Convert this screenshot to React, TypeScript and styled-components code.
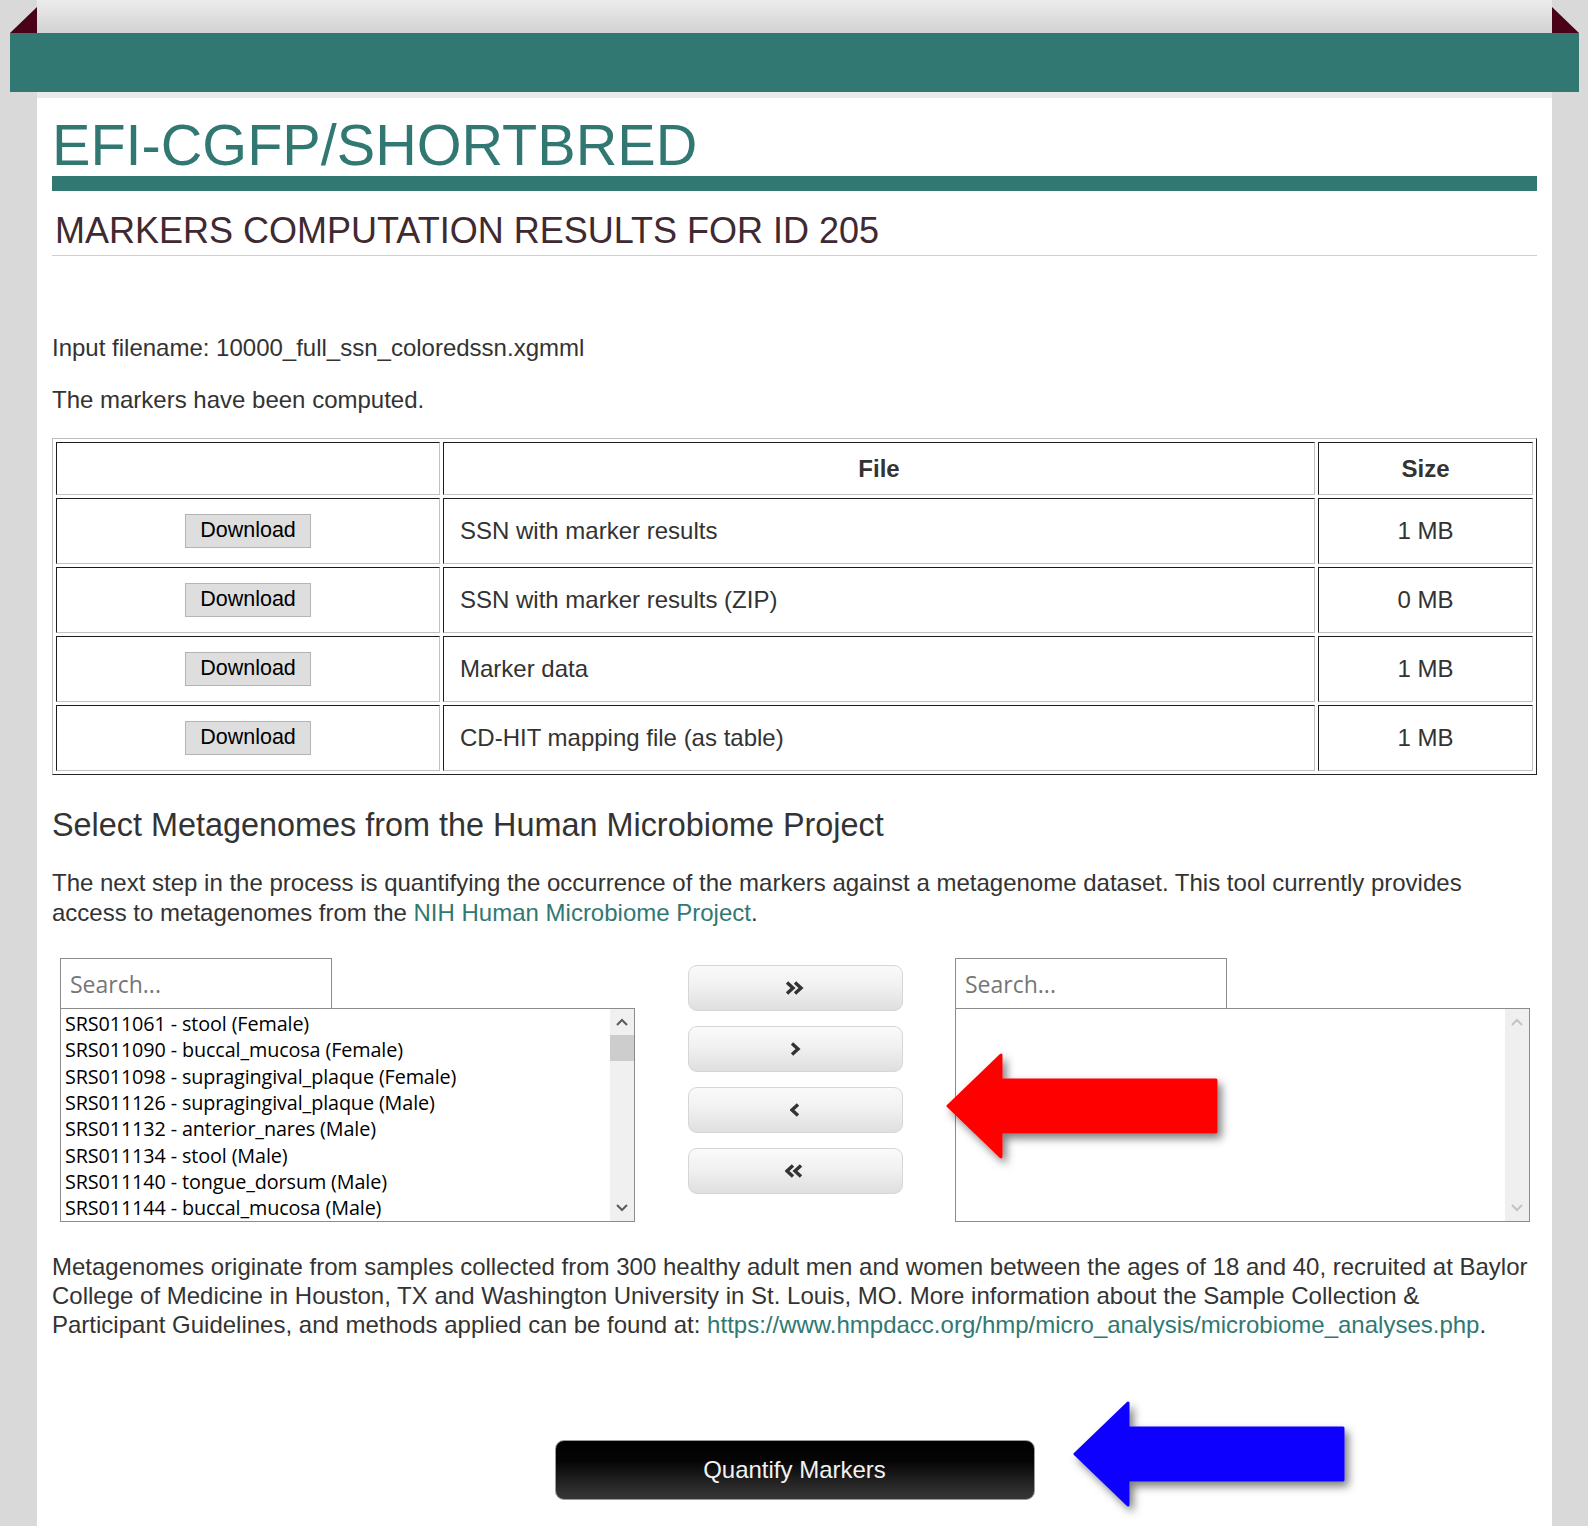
import React from "react";
import styled, { createGlobalStyle } from "styled-components";

const TEAL = "#317873";
const SANS = `"Liberation Sans", Arial, sans-serif`;
const UI = `"Open Sans", "Noto Sans", sans-serif`;

const GlobalStyle = createGlobalStyle`
  * { box-sizing: border-box; }
  html, body { margin: 0; padding: 0; }
  body {
    background: #d9d9d9;
    font-family: ${SANS};
    color: #333;
  }
`;

const Page = styled.div`
  width: 1588px;
  min-height: 1526px;
`;

const Header = styled.header`
  display: flex;
  align-items: flex-end;
  height: 33px;
  padding: 0 9px 0 10px;
`;

const Fold = styled.div<{ $side: "left" | "right" }>`
  width: 27px;
  height: 26px;
  background: #4a0219;
  clip-path: ${(p) =>
    p.$side === "left"
      ? "polygon(0 100%, 100% 0, 100% 100%)"
      : "polygon(0 0, 0 100%, 100% 100%)"};
`;

const Strip = styled.div`
  flex: 1;
  height: 33px;
  background: linear-gradient(#ececec, #d2d2d2);
`;

const Banner = styled.div`
  height: 59px;
  margin: 0 9px 0 10px;
  background: ${TEAL};
`;

const Main = styled.main`
  margin: 0 36px 0 37px;
  background: #fff;
  border-top: 6px solid #e9e9e9;
  padding: 18px 15px 40px;
`;

const Title = styled.h1`
  margin: 0;
  font-size: 57.6px;
  line-height: 58px;
  font-weight: normal;
  color: ${TEAL};
`;

const TitleRule = styled.div`
  height: 15px;
  margin-top: 2px;
  background: ${TEAL};
`;

const SubTitle = styled.h2`
  margin: 19px 0 0;
  padding: 0 0 3px 3px;
  font-size: 36px;
  line-height: 42px;
  font-weight: normal;
  color: #3f2a31;
  border-bottom: 1px solid #cfcfcf;
`;

const Text = styled.p<{ $mt?: number; $mb?: number }>`
  margin: ${(p) => p.$mt ?? 0}px 0 ${(p) => p.$mb ?? 0}px;
  font-size: 24px;
  line-height: 29.4px;
  color: #333;
`;

const Link = styled.a`
  color: ${TEAL};
  text-decoration: none;
`;

const FileTable = styled.table`
  width: 100%;
  table-layout: fixed;
  border-collapse: separate;
  border-spacing: 3px;
  border: 1px solid;
  border-color: #bdbdbd #262626 #262626 #bdbdbd;
  font-size: 24px;
  color: #333;
`;

const HeadCell = styled.th<{ $w?: number }>`
  ${(p) => (p.$w ? `width: ${p.$w}px;` : "")}
  padding: 12px 16px 11px;
  line-height: 28px;
  font-weight: bold;
  text-align: center;
  border: 1px solid;
  border-color: #1c1c1c #c2c2c2 #c2c2c2 #1c1c1c;
`;

const Cell = styled.td<{ $align?: "left" | "center" }>`
  height: 66px;
  padding: 0 16px;
  text-align: ${(p) => p.$align ?? "left"};
  vertical-align: middle;
  border: 1px solid;
  border-color: #1c1c1c #c2c2c2 #c2c2c2 #1c1c1c;
`;

const DownloadButton = styled.button`
  height: 34px;
  padding: 0 14px;
  font-family: ${SANS};
  font-size: 21.5px;
  color: #000;
  background: #dedede;
  border: 1px solid #b4b4b4;
  border-radius: 0;
`;

const SectionTitle = styled.h3`
  margin: 31px 0 0;
  font-size: 32.4px;
  line-height: 38.4px;
  font-weight: normal;
  color: #333;
`;

const DualList = styled.div`
  position: relative;
  display: flex;
  justify-content: space-between;
  align-items: flex-start;
  margin-top: 31px;
  padding: 0 7px 0 8px;
`;

const ListColumn = styled.div`
  width: 575px;
  display: flex;
  flex-direction: column;
`;

const SearchBox = styled.input`
  width: 272px;
  height: 51px;
  padding: 0 9px;
  border: 1px solid #8c8c8c;
  font-family: ${UI};
  font-size: 23px;
  color: #333;
  outline: none;
  &::placeholder {
    color: #767676;
  }
`;

const ListBox = styled.div`
  display: flex;
  height: 214px;
  margin-top: -1px;
  border: 1px solid #8c8c8c;
  background: #fff;
`;

const Options = styled.div`
  flex: 1;
  overflow: hidden;
  padding: 2px 0 0 4px;
`;

const Option = styled.div`
  font-family: ${UI};
  font-size: 19.8px;
  letter-spacing: -0.12px;
  line-height: 26.3px;
  color: #000;
  white-space: nowrap;
`;

const ScrollBar = styled.div<{ $disabled?: boolean }>`
  width: 24px;
  display: flex;
  flex-direction: column;
  align-items: center;
  background: ${(p) => (p.$disabled ? "#efefef" : "#f0f0f0")};
  color: ${(p) => (p.$disabled ? "#c4c4c4" : "#5c5c5c")};
`;

const ScrollArrow = styled.div`
  height: 26px;
  width: 100%;
  display: flex;
  align-items: center;
  justify-content: center;
`;

const Thumb = styled.div`
  width: 100%;
  height: 26px;
  background: #cdcdcd;
`;

const Filler = styled.div`
  flex: 1;
`;

const MoveButtons = styled.div`
  width: 215px;
  padding-top: 7px;
  display: flex;
  flex-direction: column;
  gap: 15px;
`;

const MoveButton = styled.button`
  height: 46px;
  display: flex;
  align-items: center;
  justify-content: center;
  border: 1px solid #d6d6d6;
  border-radius: 9px;
  background: linear-gradient(#fafafa, #f1f1f1 45%, #dfdfdf);
  color: #333;
  padding: 0;
`;

const Overlay = styled.div<{ $left: number; $top: number }>`
  position: absolute;
  left: ${(p) => p.$left}px;
  top: ${(p) => p.$top}px;
  pointer-events: none;
`;

const SubmitRow = styled.div`
  position: relative;
  display: flex;
  justify-content: center;
  padding-top: 100px;
`;

const QuantifyButton = styled.button`
  width: 480px;
  height: 60px;
  border: 1px solid #9a9a9a;
  border-radius: 9px;
  background: linear-gradient(#000 0%, #050505 35%, #2e2e2e 85%, #353535 100%);
  color: #f2f2f2;
  font-family: ${SANS};
  font-size: 24px;
`;

const Chevron = ({ dir }: { dir: "up" | "down" }) => (
  <svg width="12" height="8" viewBox="0 0 12 8">
    <polyline
      points={dir === "up" ? "1,7 6,2 11,7" : "1,1 6,6 11,1"}
      fill="none"
      stroke="currentColor"
      strokeWidth="2"
    />
  </svg>
);

const Angles = ({ dir, double }: { dir: "left" | "right"; double?: boolean }) => {
  const w = double ? 20 : 11;
  const one = (x: number) =>
    dir === "right"
      ? `${x},1.5 ${x + 6},7 ${x},12.5`
      : `${x + 6},1.5 ${x},7 ${x + 6},12.5`;
  return (
    <svg width={w} height="14" viewBox={`0 0 ${w} 14`}>
      <polyline points={one(2)} fill="none" stroke="currentColor" strokeWidth="3.4" />
      {double && (
        <polyline points={one(10)} fill="none" stroke="currentColor" strokeWidth="3.4" />
      )}
    </svg>
  );
};

const BigArrow = ({ color, id }: { color: string; id: string }) => (
  <svg width="290" height="125" viewBox="0 0 290 125" style={{ overflow: "visible" }}>
    <defs>
      <filter id={id} x="-10%" y="-20%" width="130%" height="150%">
        <feDropShadow dx="4" dy="5" stdDeviation="4" floodColor="#000" floodOpacity="0.5" />
      </filter>
    </defs>
    <polygon
      points="2,53 55,2 55,27 270,27 270,79 55,79 55,104"
      fill={color}
      stroke={color}
      strokeWidth="3"
      strokeLinejoin="round"
      filter={`url(#${id})`}
    />
  </svg>
);

const leftItems = [
  "SRS011061 - stool (Female)",
  "SRS011090 - buccal_mucosa (Female)",
  "SRS011098 - supragingival_plaque (Female)",
  "SRS011126 - supragingival_plaque (Male)",
  "SRS011132 - anterior_nares (Male)",
  "SRS011134 - stool (Male)",
  "SRS011140 - tongue_dorsum (Male)",
  "SRS011144 - buccal_mucosa (Male)",
];

const files = [
  { name: "SSN with marker results", size: "1 MB" },
  { name: "SSN with marker results (ZIP)", size: "0 MB" },
  { name: "Marker data", size: "1 MB" },
  { name: "CD-HIT mapping file (as table)", size: "1 MB" },
];

export default function App() {
  return (
    <Page>
      <GlobalStyle />
      <Header>
        <Fold $side="left" />
        <Strip />
        <Fold $side="right" />
      </Header>
      <Banner />
      <Main>
        <Title>EFI-CGFP/SHORTBRED</Title>
        <TitleRule />
        <SubTitle>MARKERS COMPUTATION RESULTS FOR ID 205</SubTitle>

        <Text $mt={77} $mb={23}>Input filename: 10000_full_ssn_coloredssn.xgmml</Text>
        <Text $mb={23}>The markers have been computed.</Text>

        <FileTable>
          <thead>
            <tr>
              <HeadCell $w={384} />
              <HeadCell>File</HeadCell>
              <HeadCell $w={215}>Size</HeadCell>
            </tr>
          </thead>
          <tbody>
            {files.map((f) => (
              <tr key={f.name}>
                <Cell $align="center">
                  <DownloadButton type="button">Download</DownloadButton>
                </Cell>
                <Cell>{f.name}</Cell>
                <Cell $align="center">{f.size}</Cell>
              </tr>
            ))}
          </tbody>
        </FileTable>

        <SectionTitle>Select Metagenomes from the Human Microbiome Project</SectionTitle>
        <Text $mt={24}>
          The next step in the process is quantifying the occurrence of the markers against a
          metagenome dataset. This tool currently provides access to metagenomes from the{" "}
          <Link href="#">NIH Human Microbiome Project</Link>.
        </Text>

        <DualList>
          <ListColumn>
            <SearchBox placeholder="Search..." />
            <ListBox>
              <Options>
                {leftItems.map((s) => (
                  <Option key={s}>{s}</Option>
                ))}
              </Options>
              <ScrollBar>
                <ScrollArrow>
                  <Chevron dir="up" />
                </ScrollArrow>
                <Thumb />
                <Filler />
                <ScrollArrow>
                  <Chevron dir="down" />
                </ScrollArrow>
              </ScrollBar>
            </ListBox>
          </ListColumn>

          <MoveButtons>
            <MoveButton type="button">
              <Angles dir="right" double />
            </MoveButton>
            <MoveButton type="button">
              <Angles dir="right" />
            </MoveButton>
            <MoveButton type="button">
              <Angles dir="left" />
            </MoveButton>
            <MoveButton type="button">
              <Angles dir="left" double />
            </MoveButton>
          </MoveButtons>

          <ListColumn>
            <SearchBox placeholder="Search..." />
            <ListBox>
              <Options />
              <ScrollBar $disabled>
                <ScrollArrow>
                  <Chevron dir="up" />
                </ScrollArrow>
                <Filler />
                <ScrollArrow>
                  <Chevron dir="down" />
                </ScrollArrow>
              </ScrollBar>
            </ListBox>
          </ListColumn>

          <Overlay $left={894} $top={95}>
            <BigArrow color="#ff0000" id="redShadow" />
          </Overlay>
        </DualList>

        <Text $mt={29.5}>
          Metagenomes originate from samples collected from 300 healthy adult men and women
          between the ages of 18 and 40, recruited at Baylor College of Medicine in Houston, TX
          and Washington University in St. Louis, MO. More information about the Sample
          Collection &amp; Participant Guidelines, and methods applied can be found at:{" "}
          <Link href="#">https://www.hmpdacc.org/hmp/micro_analysis/microbiome_analyses.php</Link>.
        </Text>

        <SubmitRow>
          <QuantifyButton type="button">Quantify Markers</QuantifyButton>
          <Overlay $left={1021} $top={61}>
            <BigArrow color="#1000ff" id="blueShadow" />
          </Overlay>
        </SubmitRow>
      </Main>
    </Page>
  );
}
